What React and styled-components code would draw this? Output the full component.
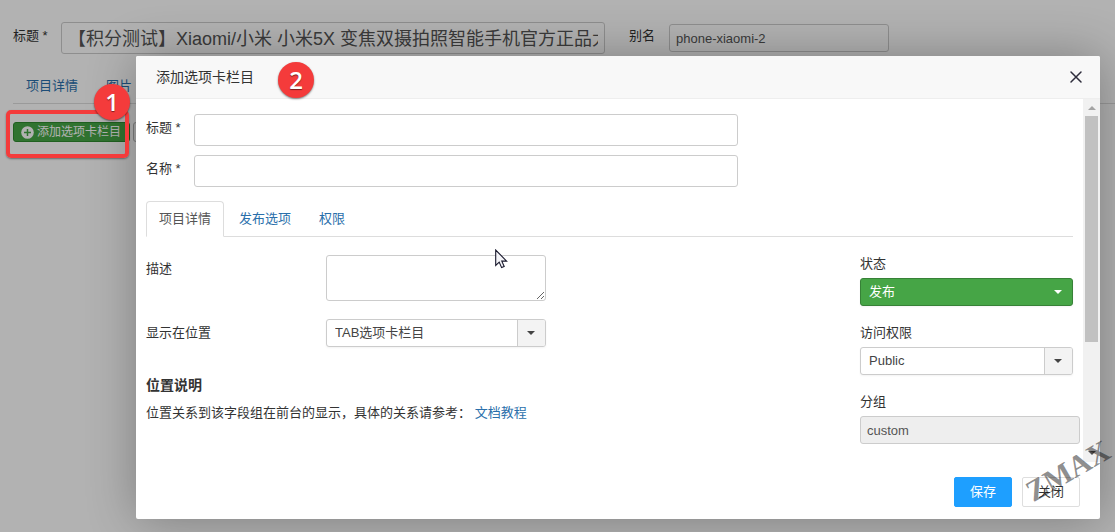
import React from "react";
import styled, { createGlobalStyle, css } from "styled-components";

const GlobalStyle = createGlobalStyle`
	* {
		box-sizing: border-box;
	}

	body {
		margin: 0;
		background: #ffffff;
		color: #333333;
		font-family: "Liberation Sans", "Noto Sans CJK SC", sans-serif;
		font-size: 13px;
		line-height: 18px;
	}

	input,
	select,
	textarea,
	button {
		margin: 0;
		font-family: inherit;
		font-size: inherit;
	}
`;

const Page = styled.div`
	position: relative;
	min-height: 100vh;
	padding: 22px 0 0 13px;
	overflow: hidden;
`;

const TitleRow = styled.div`
	display: flex;
	align-items: flex-start;
	margin-bottom: 14px;
`;

const Label = styled.label`
	flex: none;
	width: ${props => props.width || "auto"};
	padding-top: 5px;
`;

const fieldStyle = css`
	border: 1px solid #cccccc;
	border-radius: 3px;
	background: #ffffff;
	color: #555555;
	outline: none;
`;

const TextInput = styled.input`
	${fieldStyle}
	width: 220px;
	height: 28px;
	padding: 4px 6px;

	&:read-only {
		background: #eeeeee;
	}
`;

const LargeInput = styled(TextInput)`
	width: 544px;
	height: 32px;
	padding-bottom: 6px;
	font-size: 18px;
`;

const AliasField = styled.div`
	display: flex;
	margin-left: 24px;
	padding-top: 2px;

	label {
		width: 40px;
		padding-top: 3px;
	}
`;

const Tabs = styled.nav`
	display: flex;
	gap: 2px;
	border-bottom: 1px solid #dddddd;
`;

const Tab = styled.a`
	margin-bottom: -1px;
	padding: 8px 12px;
	border: 1px solid ${props => (props.$active ? "#dddddd" : "transparent")};
	border-bottom-color: ${props => (props.$active ? "#ffffff" : "transparent")};
	border-radius: 4px 4px 0 0;
	color: ${props => (props.$active ? "#555555" : "#2a6fab")};
	text-decoration: none;
`;

const Toolbar = styled.div`
	display: flex;
	gap: 3px;
	padding-top: 18px;
`;

const ToolButton = styled.button`
	display: flex;
	align-items: center;
	gap: 3px;
	height: 20px;
	padding: 0 8px 0 7px;
	border: 1px solid ${props => (props.$primary ? "#2e8a2e" : "#b3b3b3")};
	border-radius: 3px;
	background: ${props => (props.$primary ? "#46a546" : "#f3f3f3")};
	color: ${props => (props.$primary ? "#ffffff" : "#333333")};
	font-size: 12px;
	line-height: 18px;
`;

const Highlight = styled.div`
	position: absolute;
	z-index: 3;
	top: 110px;
	left: 6px;
	width: 123px;
	height: 48px;
	border: 4px solid #f43b3b;
	border-radius: 5px;
	box-shadow: 0 1px 2px rgba(0, 0, 0, 0.4);
`;

const Marker = styled.span`
	position: absolute;
	top: ${props => props.$top};
	left: ${props => props.$left};
	width: 36px;
	height: 36px;
	border-radius: 50%;
	background: #f43b3b;
	box-shadow: 0 1px 2px rgba(0, 0, 0, 0.5);
	color: #ffffff;
	font-family: "Open Sans", sans-serif;
	font-size: 24px;
	font-weight: 600;
	line-height: 36px;
	text-align: center;
	text-shadow: 0 1px 1px rgba(0, 0, 0, 0.5);
`;

const Shade = styled.div`
	position: absolute;
	z-index: 2;
	inset: 0;
	display: flex;
	padding: 56px 15px 13px 136px;
	background: rgba(0, 0, 0, 0.3);
`;

const Dialog = styled.section`
	position: relative;
	display: flex;
	flex: 1;
	flex-direction: column;
	min-width: 0;
	border-radius: 2px;
	background: #ffffff;
	box-shadow: 1px 1px 50px rgba(0, 0, 0, 0.3);
`;

const DialogHeader = styled.header`
	display: flex;
	align-items: center;
	justify-content: space-between;
	height: 43px;
	padding: 0 17px 0 20px;
	border-bottom: 1px solid #eeeeee;
	border-radius: 2px 2px 0 0;
	background: #f8f8f8;
`;

const DialogTitle = styled.h1`
	margin: 0;
	font-size: 14px;
	font-weight: 400;
	line-height: 42px;
`;

const CloseButton = styled.button`
	display: flex;
	padding: 0;
	border: 0;
	background: none;
	color: #2e2d3c;
`;

const DialogBody = styled.div`
	display: flex;
	flex: 1;
	min-height: 0;
`;

const Content = styled.div`
	flex: 1;
	min-width: 0;
	padding: 15px 10px 0;
`;

const FieldRow = styled.div`
	display: flex;
	margin-bottom: ${props => props.$gap || "9px"};
`;

const TabsArea = styled.div`
	padding-top: 5px;
`;

const Columns = styled.div`
	display: flex;
	justify-content: space-between;
	padding-top: 18px;
`;

const Main = styled.div`
	flex: 1;
`;

const Side = styled.div`
	flex: none;
	width: 213px;
`;

const SideField = styled.div`
	display: flex;
	flex-direction: column;
	align-items: flex-start;
	gap: 5px;
	margin-bottom: 18px;

	label {
		padding: 0;
	}
`;

const TextArea = styled.textarea`
	${fieldStyle}
	width: 220px;
	height: 46px;
	padding: 4px 6px;
`;

const SelectBox = styled.div`
	position: relative;
	width: ${props => props.$width || "100%"};
`;

const Select = styled.select`
	${fieldStyle}
	display: block;
	width: 100%;
	height: 28px;
	padding: 0 30px 2px 8px;
	border-color: ${props => (props.$green ? "#378137" : "#cccccc")};
	background: ${props => (props.$green ? "#46a546" : "#ffffff")};
	box-shadow: 0 1px 2px rgba(0, 0, 0, 0.05);
	color: ${props => (props.$green ? "#ffffff" : "#444444")};
	appearance: none;
`;

const Arrow = styled.span`
	position: absolute;
	top: 1px;
	right: 1px;
	bottom: 1px;
	display: flex;
	align-items: center;
	justify-content: center;
	width: 28px;
	padding: 0 1px 1px 0;
	border-left: 1px solid ${props => (props.$green ? "transparent" : "#cccccc")};
	border-radius: 0 2px 2px 0;
	background: ${props => (props.$green ? "transparent" : "#f3f3f3")};
	color: ${props => (props.$green ? "#ffffff" : "#444444")};
	pointer-events: none;

	&::after {
		content: "";
		border: 4px solid transparent;
		border-top-color: currentColor;
		border-bottom: 0;
	}
`;

const NoteTitle = styled.h2`
	margin: 0 0 10px;
	font-size: 14px;
	font-weight: 700;
	line-height: 18px;
`;

const Note = styled.p`
	margin: 0;

	a {
		color: #2a6fab;
		text-decoration: none;
	}
`;

const ScrollTrack = styled.div`
	display: flex;
	flex: none;
	flex-direction: column;
	align-items: center;
	justify-content: space-between;
	width: 17px;
	padding: 7px 0;
	background: #f1f1f1;
`;

const ScrollArrow = styled.i`
	border: 4px solid transparent;
	border-top: ${props => (props.$up ? "0" : "4px solid #505050")};
	border-bottom: ${props => (props.$up ? "4px solid #a3a3a3" : "0")};
`;

const ScrollThumb = styled.div`
	width: 13px;
	height: 226px;
	margin: 6px 0 auto;
	background: #c1c1c1;
`;

const DialogFooter = styled.footer`
	display: flex;
	justify-content: flex-end;
	gap: 10px;
	padding: 15px 20px 12px;
`;

const FooterButton = styled.button`
	width: 58px;
	height: 30px;
	padding: 0 0 3px;
	border: 1px solid ${props => (props.$primary ? "#1e9fff" : "#dedede")};
	border-radius: 2px;
	background: ${props => (props.$primary ? "#1e9fff" : "#ffffff")};
	color: ${props => (props.$primary ? "#ffffff" : "#333333")};
`;

const Watermark = styled.span`
	position: absolute;
	z-index: 3;
	right: 1px;
	bottom: 46px;
	color: rgba(0, 0, 0, 0.45);
	font-family: "Liberation Serif", serif;
	font-size: 30px;
	font-weight: 700;
	line-height: 30px;
	pointer-events: none;
	transform: rotate(-30deg);
`;

const Pointer = styled.svg`
	position: absolute;
	z-index: 3;
	top: 193px;
	left: 359px;
`;

const PlusIcon = () => (
	<svg width="13" height="13" viewBox="0 0 13 13" aria-hidden="true">
		<circle cx="6.5" cy="6.5" r="6.3" fill="#ffffff" />
		<path d="M6.5 3v7M3 6.5h7" stroke="#46a546" strokeWidth="1.5" />
	</svg>
);

const SelectField = ({ id, value, green, width }) => (
	<SelectBox $width={width}>
		<Select id={id} $green={green} defaultValue={value}>
			<option>{value}</option>
		</Select>
		<Arrow $green={green} />
	</SelectBox>
);

const ItemForm = () => (
	<>
		<TitleRow>
			<Label width="48px" htmlFor="item-title">标题 *</Label>
			<LargeInput
				id="item-title"
				defaultValue="【积分测试】Xiaomi/小米 小米5X 变焦双摄拍照智能手机官方正品大"
			/>
			<AliasField>
				<Label htmlFor="item-alias">别名</Label>
				<TextInput id="item-alias" defaultValue="phone-xiaomi-2" />
			</AliasField>
		</TitleRow>
		<Tabs>
			<Tab href="#item">项目详情</Tab>
			<Tab href="#images">图片</Tab>
		</Tabs>
		<Toolbar>
			<ToolButton type="button" $primary>
				<PlusIcon />
				添加选项卡栏目
			</ToolButton>
			<ToolButton type="button" />
		</Toolbar>
	</>
);

const GroupDialog = () => (
	<Dialog role="dialog" aria-labelledby="dialog-title">
		<DialogHeader>
			<DialogTitle id="dialog-title">添加选项卡栏目</DialogTitle>
			<CloseButton type="button" aria-label="关闭">
				<svg width="14" height="14" viewBox="0 0 14 14">
					<path d="M2 2l10 10M12 2L2 12" stroke="currentColor" strokeWidth="1.5" strokeLinecap="round" />
				</svg>
			</CloseButton>
			<Marker $top="6px" $left="142px">2</Marker>
		</DialogHeader>
		<DialogBody>
			<Content>
				<FieldRow>
					<Label width="48px" htmlFor="group-title">标题 *</Label>
					<LargeInput id="group-title" />
				</FieldRow>
				<FieldRow>
					<Label width="48px" htmlFor="group-name">名称 *</Label>
					<LargeInput id="group-name" />
				</FieldRow>
				<TabsArea>
					<Tabs>
						<Tab href="#details" $active>项目详情</Tab>
						<Tab href="#publishing">发布选项</Tab>
						<Tab href="#permissions">权限</Tab>
					</Tabs>
				</TabsArea>
				<Columns>
					<Main>
						<FieldRow $gap="18px">
							<Label width="180px" htmlFor="description">描述</Label>
							<TextArea id="description" />
						</FieldRow>
						<FieldRow $gap="29px">
							<Label width="180px" htmlFor="position">显示在位置</Label>
							<SelectField id="position" value="TAB选项卡栏目" width="220px" />
						</FieldRow>
						<NoteTitle>位置说明</NoteTitle>
						<Note>
							位置关系到该字段组在前台的显示，具体的关系请参考： <a href="#docs">文档教程</a>
						</Note>
					</Main>
					<Side>
						<SideField>
							<Label htmlFor="status">状态</Label>
							<SelectField id="status" value="发布" green />
						</SideField>
						<SideField>
							<Label htmlFor="access">访问权限</Label>
							<SelectField id="access" value="Public" />
						</SideField>
						<SideField>
							<Label htmlFor="group">分组</Label>
							<TextInput id="group" value="custom" readOnly />
						</SideField>
					</Side>
				</Columns>
			</Content>
			<ScrollTrack>
				<ScrollArrow $up />
				<ScrollThumb />
				<ScrollArrow />
			</ScrollTrack>
		</DialogBody>
		<DialogFooter>
			<FooterButton type="button" $primary>保存</FooterButton>
			<FooterButton type="button">关闭</FooterButton>
		</DialogFooter>
		<Pointer width="13" height="20" viewBox="0 0 13 20" aria-hidden="true">
			<path
				d="M.7 1v15.4l3.5-3.3 2.4 5.5 2.6-1.1-2.4-5.4h4.8z"
				fill="#f4f4f8"
				stroke="#17172b"
				strokeWidth="1.1"
			/>
		</Pointer>
	</Dialog>
);

const App = () => (
	<Page>
		<GlobalStyle />
		<ItemForm />
		<Shade>
			<GroupDialog />
			<Watermark>ZMAX</Watermark>
		</Shade>
		<Highlight>
			<Marker $top="-30px" $left="84px">1</Marker>
		</Highlight>
	</Page>
);

export default App;
